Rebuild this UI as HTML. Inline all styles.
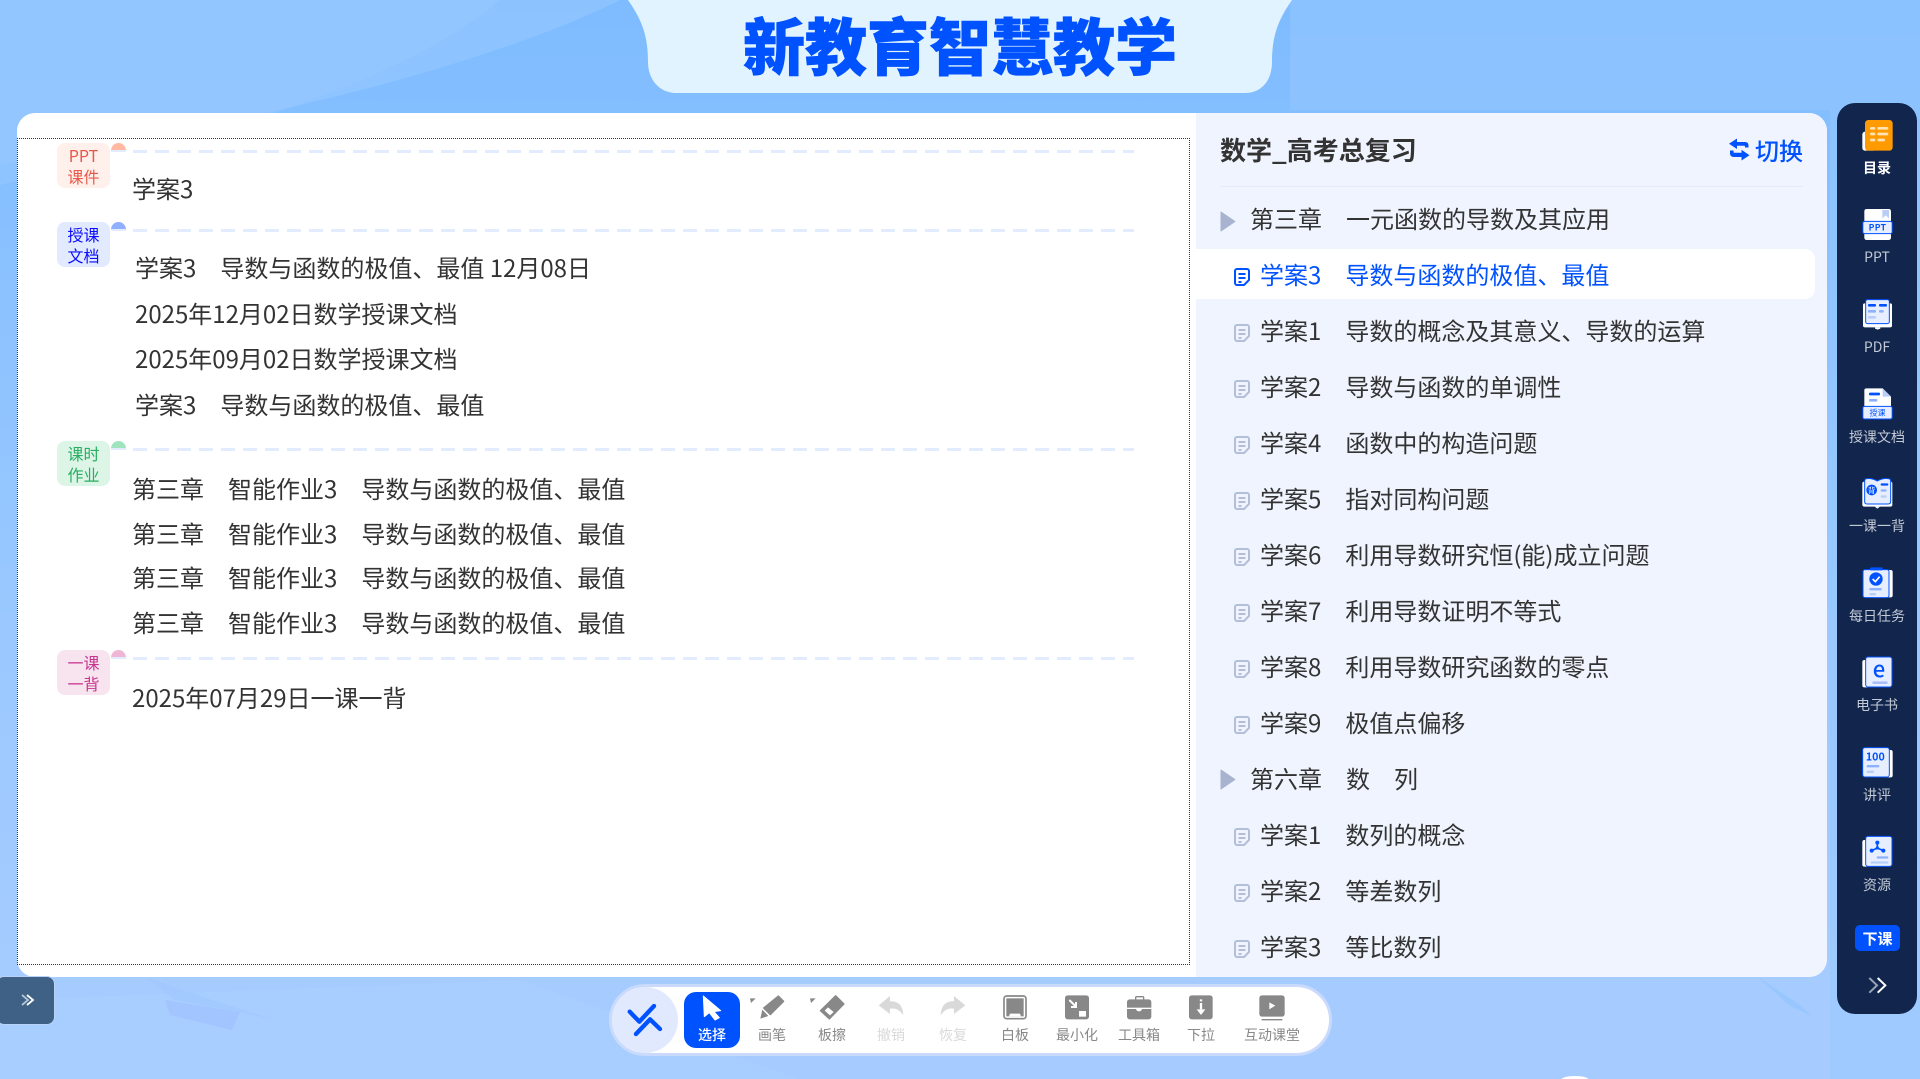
<!DOCTYPE html>
<html lang="zh-CN">
<head>
<meta charset="utf-8">
<title>新教育智慧教学</title>
<style>
*{box-sizing:border-box}
html,body{margin:0;padding:0}
body{position:relative;width:1920px;height:1079px;overflow:hidden;font-family:"Noto Sans CJK SC","Liberation Sans",sans-serif;color:#333;background:linear-gradient(180deg,#7ebcff 0,#8ac1ff 260px,#99c8ff 600px,#a6ccff 1000px)}
.a{position:absolute;white-space:pre}
.t{position:absolute;white-space:pre;font-size:24px;line-height:40px;height:40px;color:#333}
.tag{position:absolute;left:57px;width:53px;height:45px;border-radius:8px;font-size:16px;line-height:21px;text-align:center;padding-top:2px;white-space:pre}
.semi{position:absolute;left:111px;width:15px;height:8px;border-radius:8px 8px 0 0}
.dash{position:absolute;left:133px;width:1001px;height:3px;background:repeating-linear-gradient(90deg,#e3ecff 0,#e3ecff 14px,transparent 14px,transparent 22px)}
.under{position:absolute;left:111px;width:15px;height:2px;background:#e3ecff}
.side{position:absolute;left:1837px;width:80px;text-align:center;font-size:14px;line-height:20px;height:20px;color:#c3c9d5}
.tool{position:absolute;width:70px;text-align:center;font-size:14px;line-height:20px;height:20px;top:1025px;color:#888}
</style>
</head>
<body>
<svg class="a" style="left:0;top:0" width="1920" height="1079" viewBox="0 0 1920 1079">
<path d="M0 0H620C500 60 300 110 130 140L0 165Z" fill="#92c5ff" opacity=".75"/>
<path d="M0 0H500C420 70 250 130 60 170L0 185Z" fill="#9acaff" opacity=".45"/>
<path d="M1290 0H1920V1079H1830V110H1290Z" fill="#95c8ff" opacity=".5"/>
<path d="M628 0C642 20 648 36 648 62C648 80 660 93 676 93H1245C1262 93 1272 80 1272 62C1272 36 1278 20 1292 0Z" fill="#e1f3ff"/>
<path d="M0 1000L520 980L800 1079H0Z" fill="#a9ceff" opacity=".6"/>
<path d="M145 977L175 1000L240 1012L275 1020L212 1000Z" fill="#9dbfff" opacity=".3"/>
<path d="M165 1000L240 1012L232 1030L170 1015Z" fill="#9fbcff" opacity=".5"/>
<path d="M1758 977L1800 1005L1812 1016L1790 1006Z" fill="#8fc1ff" opacity=".6"/>
<ellipse cx="1575" cy="1080" rx="14" ry="4" fill="#fff"/>
</svg>

<div class="a" style="left:600px;top:-3px;width:720px;height:93px;text-align:center;font-size:62px;line-height:93px;font-weight:900;color:#0052ff;-webkit-text-stroke:.8px #0052ff;letter-spacing:0">新教育智慧教学</div>

<!-- main panel -->
<div class="a" style="left:17px;top:113px;width:1810px;height:864px;background:#fff;border-radius:18px"></div>
<div class="a" style="left:1196px;top:113px;width:631px;height:864px;background:#eff4ff;border-radius:0 18px 18px 0"></div>
<div class="a" style="left:17px;top:138px;width:1173px;height:827px;border:1px dotted #333"></div>

<!-- left content -->
<div class="tag" style="top:143px;background:#fff0eb;color:#e8584a">PPT
课件</div>
<div class="semi" style="top:143px;background:#ffb9a3"></div><div class="under" style="top:150px"></div><div class="dash" style="top:150px"></div>
<div class="t" style="left:132px;top:168px">学案3</div>

<div class="tag" style="top:222px;background:#e1eaff;color:#0a0aff">授课
文档</div>
<div class="semi" style="top:222px;background:#8fb0ff"></div><div class="under" style="top:229px"></div><div class="dash" style="top:229px"></div>
<div class="t" style="left:135px;top:247px">学案3　导数与函数的极值、最值 12月08日</div>
<div class="t" style="left:135px;top:293px">2025年12月02日数学授课文档</div>
<div class="t" style="left:135px;top:338px">2025年09月02日数学授课文档</div>
<div class="t" style="left:135px;top:384px">学案3　导数与函数的极值、最值</div>

<div class="tag" style="top:441px;background:#dcf5e7;color:#27ae60">课时
作业</div>
<div class="semi" style="top:441px;background:#a0e4bf"></div><div class="under" style="top:448px"></div><div class="dash" style="top:448px"></div>
<div class="t" style="left:132px;top:468px">第三章　智能作业3　导数与函数的极值、最值</div>
<div class="t" style="left:132px;top:513px">第三章　智能作业3　导数与函数的极值、最值</div>
<div class="t" style="left:132px;top:557px">第三章　智能作业3　导数与函数的极值、最值</div>
<div class="t" style="left:132px;top:602px">第三章　智能作业3　导数与函数的极值、最值</div>

<div class="tag" style="top:650px;background:#f7e4ef;color:#c9348f">一课
一背</div>
<div class="semi" style="top:650px;background:#f0b6d6"></div><div class="under" style="top:657px"></div><div class="dash" style="top:657px"></div>
<div class="t" style="left:132px;top:677px">2025年07月29日一课一背</div>

<!-- right list -->
<div class="a" style="left:1220px;top:130px;font-size:26px;line-height:40px;font-weight:700;color:#333">数学_高考总复习</div>
<div class="a" style="left:1755px;top:130px;font-size:24px;line-height:40px;font-weight:500;color:#0052ff">切换</div>
<div class="a" style="left:1220px;top:186px;width:583px;height:1px;background:#e4eafb"></div>
<div class="a" style="left:1196px;top:249px;width:619px;height:50px;background:#fff;border-radius:0 10px 10px 0"></div>

<div class="t" style="left:1250px;top:198px">第三章　一元函数的导数及其应用</div>
<div class="t" style="left:1260px;top:254px;color:#0052ff">学案3　导数与函数的极值、最值</div>
<div class="t" style="left:1260px;top:310px">学案1　导数的概念及其意义、导数的运算</div>
<div class="t" style="left:1260px;top:366px">学案2　导数与函数的单调性</div>
<div class="t" style="left:1260px;top:422px">学案4　函数中的构造问题</div>
<div class="t" style="left:1260px;top:478px">学案5　指对同构问题</div>
<div class="t" style="left:1260px;top:534px">学案6　利用导数研究恒(能)成立问题</div>
<div class="t" style="left:1260px;top:590px">学案7　利用导数证明不等式</div>
<div class="t" style="left:1260px;top:646px">学案8　利用导数研究函数的零点</div>
<div class="t" style="left:1260px;top:702px">学案9　极值点偏移</div>
<div class="t" style="left:1250px;top:758px">第六章　数　列</div>
<div class="t" style="left:1260px;top:814px">学案1　数列的概念</div>
<div class="t" style="left:1260px;top:870px">学案2　等差数列</div>
<div class="t" style="left:1260px;top:926px">学案3　等比数列</div>

<!-- left expander -->
<div class="a" style="left:-4px;top:976px;width:59px;height:49px;background:#3f6186;border:1px solid #b9d3f7;border-radius:8px"></div>

<!-- toolbar -->
<div class="a" style="left:609px;top:984px;width:723px;height:72px;background:#fff;border:3px solid #c9dafc;border-radius:36px"></div>
<div class="a" style="left:612px;top:987px;width:66px;height:66px;background:#e0e9fe;border-radius:50%"></div>
<div class="a" style="left:684px;top:992px;width:56px;height:56px;background:#0052ff;border-radius:12px"></div>

<!-- sidebar -->
<div class="a" style="left:1837px;top:103px;width:80px;height:911px;background:#12264d;border-radius:18px"></div>
<div class="a" style="left:1855px;top:925px;width:45px;height:26px;background:#0052ff;border-radius:5px;color:#fff;font-size:15px;font-weight:700;line-height:28px;text-align:center">下课</div>

<svg class="a" style="left:0;top:0" width="1920" height="1079" viewBox="0 0 1920 1079">
<defs>
<path id="doc" d="M1 3a2 2 0 0 1 2-2h10a2 2 0 0 1 2 2v9l-5 5H3a2 2 0 0 1-2-2ZM4.500 6h7M4.500 10h7M4.500 14h3" fill="none" stroke-width="2" stroke-linejoin="round"/>
</defs>
<!-- chapter triangles -->
<path d="M1221 212L1235 221.500L1221 231Z" fill="#a8b4cf" stroke="#a8b4cf" stroke-width="1" stroke-linejoin="round"/>
<path d="M1221 770L1235 779.500L1221 789Z" fill="#a8b4cf" stroke="#a8b4cf" stroke-width="1" stroke-linejoin="round"/>
<!-- doc icons -->
<use href="#doc" x="1234" y="268" stroke="#0052ff"/>
<use href="#doc" x="1234" y="324" stroke="#b3bfd9"/>
<use href="#doc" x="1234" y="380" stroke="#b3bfd9"/>
<use href="#doc" x="1234" y="436" stroke="#b3bfd9"/>
<use href="#doc" x="1234" y="492" stroke="#b3bfd9"/>
<use href="#doc" x="1234" y="548" stroke="#b3bfd9"/>
<use href="#doc" x="1234" y="604" stroke="#b3bfd9"/>
<use href="#doc" x="1234" y="660" stroke="#b3bfd9"/>
<use href="#doc" x="1234" y="716" stroke="#b3bfd9"/>
<use href="#doc" x="1234" y="828" stroke="#b3bfd9"/>
<use href="#doc" x="1234" y="884" stroke="#b3bfd9"/>
<use href="#doc" x="1234" y="940" stroke="#b3bfd9"/>
<!-- swap -->
<path d="M1729 143.700L1737 138.500V142H1745Q1748.500 142 1748.500 145.500V147.500H1745V146.500Q1745 145.800 1744 145.800H1737V149ZM1749.500 155.300L1741.500 149.700V152.700H1734Q1733.500 152.700 1733.500 152V150.500H1730V153Q1730 157 1734 157H1741.500V160.500Z" fill="#0052ff"/>
<!-- left expander chevrons -->
<path d="M22 995L28 1000L22 1005" fill="none" stroke="#b7c4d6" stroke-width="1.800"/>
<path d="M27 995L33 1000L27 1005" fill="none" stroke="#fff" stroke-width="1.800"/>

<!-- toolbar icons left part -->
<g transform="translate(600 970) scale(.33333)">
<path d="M89 125L118 155L162 108M108 192L150 148L180 177" fill="none" stroke="#0052ff" stroke-width="13" stroke-linecap="round" stroke-linejoin="round"/>
<path d="M310 78L362 122L342 125L358 143L345 150L328 128L313 140Z" fill="#fff" stroke="#fff" stroke-width="3" stroke-linejoin="round"/>
<path d="M450 85H467L453 99Z" fill="#888"/>
<path d="M535 78L551 94L511 134L491 114Z" fill="#888" stroke="#888" stroke-width="4" stroke-linejoin="round"/>
<path d="M487 119L505 138L481 146Z" fill="#888"/>
<path d="M630 85H647L633 99Z" fill="#888"/>
<path d="M707 78L731 102L688 146L662 122Z" fill="#888" stroke="#888" stroke-width="5" stroke-linejoin="round"/>
<path d="M684 112L701 126L690 136L674 122Z" fill="#fff"/>
<path d="M870 78L836 106L870 132V116Q895 112 910 136Q908 92 870 94Z" fill="#d9d9d9"/>
<path d="M870 78L836 106L870 132V116Q895 112 910 136Q908 92 870 94Z" fill="#d9d9d9" transform="translate(1932 0) scale(-1 1)"/>
</g>
<!-- toolbar icons right part -->
<g transform="translate(960 970) scale(.33333)">
<rect x="132" y="78" width="66" height="68" rx="8" fill="none" stroke="#888" stroke-width="5"/>
<rect x="139" y="85" width="52" height="54" fill="#888"/>
<path d="M147 139L150 131H180L183 139Z" fill="#fff"/>
<rect x="315" y="76" width="72" height="72" rx="8" fill="#888"/>
<path d="M328 90L348 110M348 96V111H333" fill="none" stroke="#fff" stroke-width="6"/>
<rect x="357" y="123" width="21" height="17" fill="#fff"/>
<rect x="527" y="80" width="24" height="12" rx="3" fill="none" stroke="#888" stroke-width="4"/>
<rect x="501" y="88" width="73" height="60" rx="8" fill="#888"/>
<rect x="501" y="113" width="73" height="4" fill="#fff"/>
<path d="M528 114H546Q546 124 537 124Q528 124 528 114Z" fill="#fff"/>
<rect x="687" y="76" width="71" height="72" rx="8" fill="#888"/>
<path d="M723 88V94M723 99V118" stroke="#fff" stroke-width="7" fill="none"/>
<path d="M710 118H736L723 135Z" fill="#fff"/>
<rect x="898" y="76" width="76" height="64" rx="8" fill="#888"/>
<path d="M928 97L946 107L928 118Z" fill="#fff"/>
<path d="M905 149H967" stroke="#888" stroke-width="4"/>
</g>

<!-- sidebar icons -->
<g transform="translate(1820 90) scale(.33333)">
<rect x="127" y="125" width="40" height="57" rx="8" fill="#fff"/>
<rect x="135" y="90" width="83" height="92" rx="10" fill="#ff9a00"/>
<g stroke="#ffe3b5" stroke-width="8" stroke-linecap="round">
<path d="M154 115H162M176 115H201M154 132H162M176 132H201M154 150H162"/>
<path d="M176 150H191"/>
</g>
<!-- PPT -->
<rect x="133" y="357" width="80" height="93" rx="7" fill="#fff"/>
<path d="M187 360H207V385L197 376L187 385Z" fill="#b9cdf6"/>
<rect x="128.500" y="394" width="88" height="37" rx="5" fill="#e6eeff" stroke="#0052ff" stroke-width="3"/>
<text x="172.500" y="422" text-anchor="middle" font-size="26" font-weight="700" fill="#0052ff" letter-spacing="1">PPT</text>
<!-- PDF -->
<rect x="129" y="640" width="87" height="72" rx="5" fill="#fff"/>
<path d="M165 712H181V716L173 719L165 716Z" fill="#fff"/>
<rect x="137" y="629" width="71" height="72" rx="6" fill="#e6eeff" stroke="#0052ff" stroke-width="3"/>
<rect x="144" y="642" width="24" height="8" rx="3" fill="#0052ff"/><rect x="177" y="642" width="24" height="8" rx="3" fill="#0052ff"/>
<rect x="144" y="660" width="24" height="8" rx="3" fill="#8db0ff"/><rect x="177" y="660" width="14" height="8" rx="3" fill="#8db0ff"/>
<rect x="144" y="678" width="24" height="8" rx="3" fill="#b8cdf8"/>
<!-- 授课文档 -->
<path d="M139 895H188L213 920V975H133V901Q133 895 139 895Z" fill="#fff"/>
<path d="M188 895L213 920H188Z" fill="#b9cdf6"/>
<rect x="147" y="908" width="33" height="8" rx="3" fill="#0052ff"/>
<rect x="147" y="927" width="25" height="8" rx="3" fill="#8db0ff"/>
<rect x="128.500" y="949" width="88" height="38" rx="5" fill="#e6eeff" stroke="#0052ff" stroke-width="3"/>
<text x="172.500" y="977" text-anchor="middle" font-size="24" fill="#0052ff">授课</text>
</g>
<g transform="translate(1820 400) scale(.33333)">
<!-- 一课一背 -->
<rect x="127" y="245" width="90" height="75" rx="6" fill="#fff"/>
<path d="M164 320H180L172 326Z" fill="#fff"/>
<path d="M172 243Q155 234 141 236Q134 236 134 243V305Q134 312 141 312H204Q212 312 212 305V243Q212 236 204 236Q188 234 172 243Z" fill="#e6eeff" stroke="#0052ff" stroke-width="3"/>
<circle cx="155" cy="270" r="16" fill="#0052ff"/>
<text x="155" y="279" text-anchor="middle" font-size="22" fill="#fff">背</text>
<rect x="182" y="250" width="23" height="7" rx="3" fill="#0052ff"/>
<rect x="182" y="268" width="18" height="7" rx="3" fill="#8db0ff"/>
<rect x="182" y="286" width="18" height="7" rx="3" fill="#b8cdf8"/>
<!-- 每日任务 -->
<rect x="135" y="510" width="83" height="82" rx="6" fill="#fff"/>
<rect x="129" y="509" width="78" height="84" rx="6" fill="#e6eeff" stroke="#0052ff" stroke-width="3"/>
<rect x="150" y="502" width="38" height="9" rx="3" fill="#0052ff"/>
<circle cx="168" cy="537" r="20" fill="#0052ff"/>
<path d="M158 537L166 545L179 530" fill="none" stroke="#fff" stroke-width="5"/>
<rect x="148" y="564" width="37" height="7" rx="3" fill="#8db0ff"/>
<rect x="148" y="579" width="20" height="7" rx="3" fill="#b8cdf8"/>
<!-- 电子书 -->
<rect x="127" y="780" width="83" height="82" rx="6" fill="#fff"/>
<rect x="137" y="771" width="79" height="90" rx="7" fill="#e6eeff" stroke="#0052ff" stroke-width="3"/>
<text x="177" y="831" text-anchor="middle" font-size="66" font-weight="500" fill="#0052ff">e</text>
<rect x="157" y="844" width="46" height="8" rx="4" fill="#a9c0f5"/>
</g>
<g transform="translate(1820 720) scale(.33333)">
<!-- 讲评 -->
<rect x="135" y="90" width="83" height="82" rx="6" fill="#fff"/>
<rect x="128" y="83" width="80" height="88" rx="7" fill="#e6eeff" stroke="#0052ff" stroke-width="3"/>
<text x="166" y="122" text-anchor="middle" font-size="32" font-weight="700" fill="#0052ff">100</text>
<rect x="140" y="135" width="38" height="7" rx="3" fill="#8db0ff"/>
<rect x="140" y="152" width="22" height="7" rx="3" fill="#b8cdf8"/>
<!-- 资源 -->
<rect x="127" y="360" width="83" height="80" rx="6" fill="#fff"/>
<rect x="137" y="349" width="79" height="90" rx="7" fill="#e6eeff" stroke="#0052ff" stroke-width="3"/>
<path d="M172 368V384M155 392L172 384L190 392" fill="none" stroke="#0052ff" stroke-width="5"/>
<circle cx="172" cy="368" r="6" fill="#0052ff"/><circle cx="155" cy="392" r="6" fill="#0052ff"/><circle cx="190" cy="392" r="6" fill="#0052ff"/><circle cx="172" cy="384" r="5" fill="#0052ff"/>
<rect x="170" y="409" width="35" height="7" rx="3" fill="#8db0ff"/>
<rect x="152" y="424" width="53" height="7" rx="3" fill="#b8cdf8"/>
<!-- chevrons -->
<path d="M148 774L171 796L148 818" fill="none" stroke="#9aa3b5" stroke-width="6"/>
<path d="M173 774L196 796L173 818" fill="none" stroke="#fff" stroke-width="6"/>
</g>
</svg>

<div class="side" style="top:158px;color:#fff;font-weight:700">目录</div>
<div class="side" style="top:247px">PPT</div>
<div class="side" style="top:337px">PDF</div>
<div class="side" style="top:427px">授课文档</div>
<div class="side" style="top:516px">一课一背</div>
<div class="side" style="top:606px">每日任务</div>
<div class="side" style="top:695px">电子书</div>
<div class="side" style="top:785px">讲评</div>
<div class="side" style="top:875px">资源</div>

<div class="tool" style="left:677px;color:#fff;font-weight:500">选择</div>
<div class="tool" style="left:737px">画笔</div>
<div class="tool" style="left:797px">板擦</div>
<div class="tool" style="left:856px;color:#d9d9d9">撤销</div>
<div class="tool" style="left:918px;color:#d9d9d9">恢复</div>
<div class="tool" style="left:980px">白板</div>
<div class="tool" style="left:1042px">最小化</div>
<div class="tool" style="left:1104px">工具箱</div>
<div class="tool" style="left:1166px">下拉</div>
<div class="tool" style="left:1237px">互动课堂</div>
</body>
</html>
